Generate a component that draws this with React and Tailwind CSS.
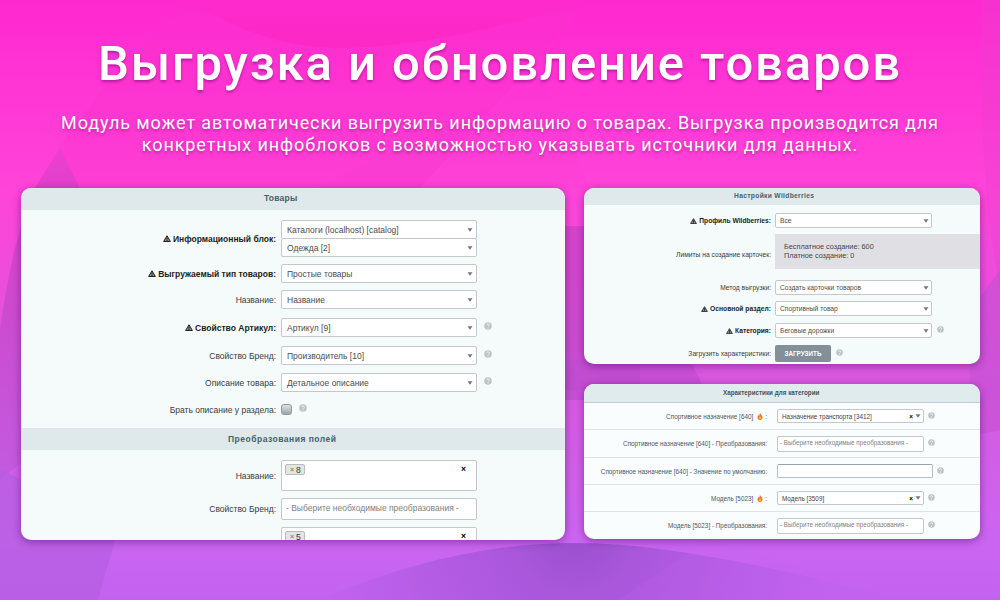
const PRODUCT_ROWS = [
  { label: 'Выгружаемый тип товаров:', value: 'Простые товары', required: true, cls: 'mt-[7px]' },
  { label: 'Название:', value: 'Название', cls: 'mt-[7px]' },
  { label: 'Свойство Артикул:', value: 'Артикул [9]', required: true, help: true, cls: 'mt-[9px]' },
  { label: 'Свойство Бренд:', value: 'Производитель [10]', help: true, cls: 'mt-[9px]' },
  { label: 'Описание товара:', value: 'Детальное описание', help: true, cls: 'mt-[8px]' },
]

const CATEGORY_ROWS = [
  { label: 'Спортивное назначение [640]', kind: 'select', value: 'Назначение транспорта [3412]', hot: true, cls: 'h-[27px]' },
  { label: 'Спортивное назначение [640] - Преобразования:', kind: 'multi', cls: 'h-[28px]' },
  { label: 'Спортивное назначение [640] - Значение по умолчанию:', kind: 'input', cls: 'h-[27px]' },
  { label: 'Модель [5023]', kind: 'select', value: 'Модель [3509]', hot: true, cls: 'h-[27px]' },
  { label: 'Модель [5023] - Преобразования:', kind: 'multi', cls: 'h-[28px]' },
]

const PLACEHOLDER = '- Выберите необходимые преобразования -'

function Backdrop() {
  return (
    <svg className="absolute inset-0 w-full h-full" viewBox="0 0 1000 600" preserveAspectRatio="none">
      <defs>
        <linearGradient id="base" x1="0" y1="0" x2="0" y2="1">
          <stop offset="0" stopColor="#ff29d0" />
          <stop offset="0.32" stopColor="#ff44d9" />
          <stop offset="0.62" stopColor="#d957de" />
          <stop offset="0.9" stopColor="#cb65f1" />
          <stop offset="1" stopColor="#c263f0" />
        </linearGradient>
        <linearGradient id="side" gradientUnits="userSpaceOnUse" x1="0" y1="148" x2="0" y2="480">
          <stop offset="0" stopColor="#ec3fd0" />
          <stop offset="0.12" stopColor="#e13fcb" />
          <stop offset="0.5" stopColor="#cc4bcf" />
          <stop offset="1" stopColor="#c25be0" />
        </linearGradient>
        <linearGradient id="gap" x1="0" y1="0" x2="0" y2="1">
          <stop offset="0" stopColor="#d643c9" />
          <stop offset="1" stopColor="#c450d4" />
        </linearGradient>
        <linearGradient id="cap" x1="0" y1="0" x2="0" y2="1">
          <stop offset="0" stopColor="#ff2bcb" />
          <stop offset="1" stopColor="#fb24bd" />
        </linearGradient>
        <radialGradient id="hill" gradientUnits="userSpaceOnUse" cx="575" cy="535" r="260">
          <stop offset="0" stopColor="#9a50ce" />
          <stop offset="0.25" stopColor="#aa57dc" />
          <stop offset="1" stopColor="#c263f0" />
        </radialGradient>
      </defs>
      <rect width="1000" height="600" fill="url(#base)" />
      <path d="M190 0Q90 90 35 188H420L590 0Z" fill="#f631c8" opacity="0.25" />
      <path d="M190 0Q260 48 340 48Q440 48 590 0Z" fill="url(#cap)" opacity="0.6" />
      <path d="M545 80L315 188H590Z" fill="#f03bd0" opacity="0.15" />
      <path d="M60 148L35 188Q12 240 0 330V480L100 400V240L80 188Z" fill="url(#side)" />
      <path d="M560 226H640V400H560Z" fill="url(#gap)" />
      <path d="M560 360H690L705 390H560Z" fill="#c14bd0" opacity="0.7" />
      <path d="M982 0Q978 120 990 230L1000 290V0Z" fill="#e83fcd" opacity="0.35" />
      <path d="M970 310L1000 270V430L970 436Z" fill="#c450d2" opacity="0.6" />
      <path d="M0 470L115 520V540L98 600H0Z" fill="#b45de0" opacity="0.65" />
      <path d="M320 600Q450 543 575 543Q690 543 900 600Z" fill="url(#hill)" />
      <path d="M705 540L620 600H900Q790 562 705 540Z" fill="#c263f0" opacity="0.2" />
    </svg>
  )
}

function Help({ className = '' }) {
  return (
    <svg className={`shrink-0 ${className}`} viewBox="0 0 16 16">
      <circle cx="8" cy="8" r="7.5" fill="#bcc3c6" />
      <path d="M5.5 6.2a2.5 2.5 0 1 1 3.6 2.2c-.8.4-1.1.8-1.1 1.5M8 11.4v1.8" fill="none" stroke="#f5f9f9" strokeWidth="1.8" />
    </svg>
  )
}

function Caret() {
  return (
    <svg className="w-[6px] h-[4px] shrink-0" viewBox="0 0 6 4">
      <path d="M0.5 0.3H5.5L3 3.7Z" fill="#777" />
    </svg>
  )
}

function Warning({ className }) {
  return (
    <svg className={`inline-block shrink-0 ${className}`} viewBox="0 0 16 14">
      <path d="M8 1.5L14.8 13H1.2Z" fill="#8a8f90" stroke="#222" strokeWidth="2" strokeLinejoin="round" />
      <path d="M8 5v4.2M8 10v2" stroke="#222" strokeWidth="2" />
    </svg>
  )
}

function Flame() {
  return (
    <svg className="w-[6px] h-[7px] ml-[4px] mr-[2px]" viewBox="0 0 12 14">
      <path d="M6 0C7 3 11 5 11 9C11 12 9 14 6 14C3 14 1 12 1 9C1 7 2 5 3 4C3.5 5 4 5.5 4.5 5.5C5 4 5 2 6 0Z" fill="#f4701c" />
      <path d="M6 6C7 8 9 9 8.5 11C8 13 4 13 3.5 11C3 9 5 8 6 6Z" fill="#ffc02e" />
    </svg>
  )
}

function Select({ value, className = '' }) {
  return (
    <div className={`flex items-center justify-between bg-white border border-[#c4c8ca] rounded-[2px] text-[#4c4c4c] whitespace-nowrap ${className}`}>
      <span>{value}</span>
      <Caret />
    </div>
  )
}

function Tag({ value }) {
  return (
    <span className="flex items-center gap-[2px] h-[11px] pl-[4px] pr-[3px] rounded-[2px] border border-[#bbb] bg-[#e4e4e4] text-[8.5px] text-[#333]">
      <span className="text-[#888] text-[7px] font-bold">×</span>
      {value}
    </span>
  )
}

function ProductRow({ label, required, help, children, cls }) {
  return (
    <div className={`flex items-center ${cls}`}>
      <div className={`w-[255px] flex items-center justify-end gap-[2px] whitespace-nowrap ${required ? 'font-bold text-[#1b1f20]' : 'text-[#353c3d]'}`}>
        {required && <Warning className="w-[8px] h-[7px]" />}
        {label}
      </div>
      <div className="ml-[5px]">{children}</div>
      {help && <Help className="size-[8px] ml-[7px] -mt-[4px]" />}
    </div>
  )
}

function TagBox({ value }) {
  return (
    <div className="w-[196px] h-[31px] pt-[3px] pl-[3px] pr-[10px] flex items-start justify-between bg-white border border-[#c4c8ca] rounded-[2px]">
      <Tag value={value} />
      <span className="font-bold text-black">×</span>
    </div>
  )
}

function ProductsPanel() {
  return (
    <section className="w-[544px] h-[352px] shrink-0 rounded-[10px] overflow-hidden bg-[#f5fafb] shadow-[0_2px_8px_rgba(60,0,90,0.45)] text-[8.5px] leading-[10px]">
      <h2 className="h-[22px] pt-[5px] pl-[243px] bg-[#dfe9eb] font-bold text-[#44626a] tracking-[0.2px]">Товары</h2>

      <ProductRow label="Информационный блок:" required cls="mt-[10px]">
        <Select value="Каталоги (localhost) [catalog]" className="w-[196px] h-[19px] pl-[5px] pr-[3px]" />
        <Select value="Одежда [2]" className="w-[196px] h-[19px] pl-[5px] pr-[3px] -mt-px" />
      </ProductRow>
      {PRODUCT_ROWS.map(({ value, ...row }) => (
        <ProductRow key={row.label} {...row}>
          <Select value={value} className="w-[196px] h-[19px] pl-[5px] pr-[3px]" />
        </ProductRow>
      ))}
      <ProductRow label="Брать описание у раздела:" help cls="mt-[12px]">
        <div className="size-[11px] rounded-[3px] border border-[#8f999e] bg-linear-to-b from-[#dfe3e5] to-[#9da5a9]" />
      </ProductRow>

      <h2 className="mt-[13px] h-[22px] pt-[6px] pl-[207px] bg-[#dfe9eb] font-bold text-[#44626a]  tracking-[0.5px]">Преобразования полей</h2>

      <ProductRow label="Название:" cls="mt-[10px]">
        <TagBox value="8" />
      </ProductRow>
      <ProductRow label="Свойство Бренд:" cls="mt-[7px]">
        <div className="w-[196px] h-[22px] px-[4px] pt-[4px] bg-white border border-[#c4c8ca] rounded-[2px] text-[#808080] whitespace-nowrap">{PLACEHOLDER}</div>
      </ProductRow>
      <ProductRow label="Описание товара:" cls="mt-[7px]">
        <TagBox value="5" />
      </ProductRow>
    </section>
  )
}

function SettingsRow({ label, required, help, children, cls, labelCls = '' }) {
  return (
    <div className={`flex items-center ${cls}`}>
      <div className={`w-[187px] flex items-center justify-end gap-[2px] whitespace-nowrap ${required ? 'font-bold text-[#1b1f20]' : 'text-[#353c3d]'} ${labelCls}`}>
        {required && <Warning className="w-[7px] h-[6px]" />}
        {label}
      </div>
      <div className="ml-[4px]">{children}</div>
      {help && <Help className="size-[7px] ml-[5px] -mt-[3px]" />}
    </div>
  )
}

function SettingsPanel() {
  return (
    <section className="w-[396px] h-[176px] rounded-[10px] overflow-hidden bg-[#f5fafb] shadow-[0_2px_8px_rgba(60,0,90,0.45)] text-[6.7px] leading-[9px]">
      <h2 className="h-[17px] pt-[3px] pl-[150px] bg-[#dfe9eb] font-bold text-[#44626a] tracking-[0.32px]">Настройки Wildberries</h2>
      <SettingsRow label="Профиль Wildberries:" required cls="mt-[8px]">
        <Select value="Все" className="w-[157px] h-[15px] pl-[4px] pr-[2px]" />
      </SettingsRow>
      <SettingsRow label="Лимиты на создание карточек:" cls="mt-[6px]" labelCls="pt-[5px]">
        <div className="w-[205px] h-[35px] pl-[9px] pt-[8px] bg-[#e0e0e4] text-[7.3px] text-[#444]">
          <p>Бесплатное создание: 600</p>
          <p>Платное создание: 0</p>
        </div>
      </SettingsRow>
      <SettingsRow label="Метод выгрузки:" cls="mt-[11px]">
        <Select value="Создать карточки товаров" className="w-[157px] h-[15px] pl-[4px] pr-[2px]" />
      </SettingsRow>
      <SettingsRow label="Основной раздел:" required cls="mt-[6px]">
        <Select value="Спортивный товар" className="w-[157px] h-[15px] pl-[4px] pr-[2px]" />
      </SettingsRow>
      <SettingsRow label="Категория:" required help cls="mt-[7px]">
        <Select value="Беговые дорожки" className="w-[157px] h-[15px] pl-[4px] pr-[2px]" />
      </SettingsRow>
      <SettingsRow label="Загрузить характеристики:" help cls="mt-[7px]">
        <button className="block w-[56px] h-[17px] rounded-[2px] bg-[#848f98] text-white font-bold text-[6.3px]">ЗАГРУЗИТЬ</button>
      </SettingsRow>
    </section>
  )
}

function CategoryControl({ kind, value }) {
  if (kind === 'input') {
    return <div className="w-[156px] h-[14px] bg-white border border-[#b4bdc2] border-t-[#98a3aa] rounded-[2px]" />
  }
  if (kind === 'multi') {
    return <div className="w-[147px] h-[16px] px-[2px] pt-[1px] bg-white border border-[#c4c8ca] rounded-[2px] text-[#808080] text-[6.3px] whitespace-nowrap">{PLACEHOLDER}</div>
  }
  return (
    <div className="w-[147px] h-[14px] pl-[4px] pr-[2px] flex items-center bg-white border border-[#c4c8ca] rounded-[2px] text-[#444] whitespace-nowrap">
      <span className="flex-1">{value}</span>
      <span className="font-bold text-black mr-[2px]">×</span>
      <Caret />
    </div>
  )
}

function CategoryPanel() {
  return (
    <section className="w-[396px] h-[155px] rounded-[10px] overflow-hidden bg-[#f9fdfd] shadow-[0_2px_8px_rgba(60,0,90,0.45)] text-[6.35px] leading-[9px]">
      <h2 className="h-[19px] pt-[4px] pl-[139px] bg-[#dfebec] border-b border-[#c2cbce] font-bold text-[#44565d] text-[6.3px]">Характеристики для категории</h2>
      {CATEGORY_ROWS.map((row) => (
        <div key={row.label} className={`flex items-center border-b border-[#dde4e7] ${row.cls}`}>
          <div className="w-[183px] flex items-center justify-end whitespace-nowrap text-[#4e585f]">
            {row.label}
            {row.hot && <><Flame />:</>}
          </div>
          <div className="ml-[10px]"><CategoryControl {...row} /></div>
          <Help className="size-[7px] ml-[4px] -mt-[2px]" />
        </div>
      ))}
    </section>
  )
}

export default function App() {
  return (
    <main className="relative w-[1000px] h-[600px] overflow-hidden font-['Liberation_Sans',sans-serif]">
      <Backdrop />
      <div className="relative">
        <header className="h-[188px] pt-[35px] text-center text-white font-['Roboto',sans-serif] whitespace-nowrap">
          <h1 className="text-[49px] leading-[57px] font-medium tracking-[1.9px] [text-shadow:0_2px_3px_rgba(90,0,90,0.45)]">Выгрузка и обновление товаров</h1>
          <p className="mt-[20px] text-[18px] leading-[22px] tracking-[0.89px] [text-shadow:0_2px_3px_rgba(90,0,90,0.4)]">
            Модуль может автоматически выгрузить информацию о товарах. Выгрузка производится для
            <br />
            конкретных инфоблоков с возможностью указывать источники для данных.
          </p>
        </header>
        <div className="flex gap-[19px] pl-[21px]">
          <ProductsPanel />
          <div className="flex flex-col gap-[20px]">
            <SettingsPanel />
            <CategoryPanel />
          </div>
        </div>
      </div>
    </main>
  )
}
